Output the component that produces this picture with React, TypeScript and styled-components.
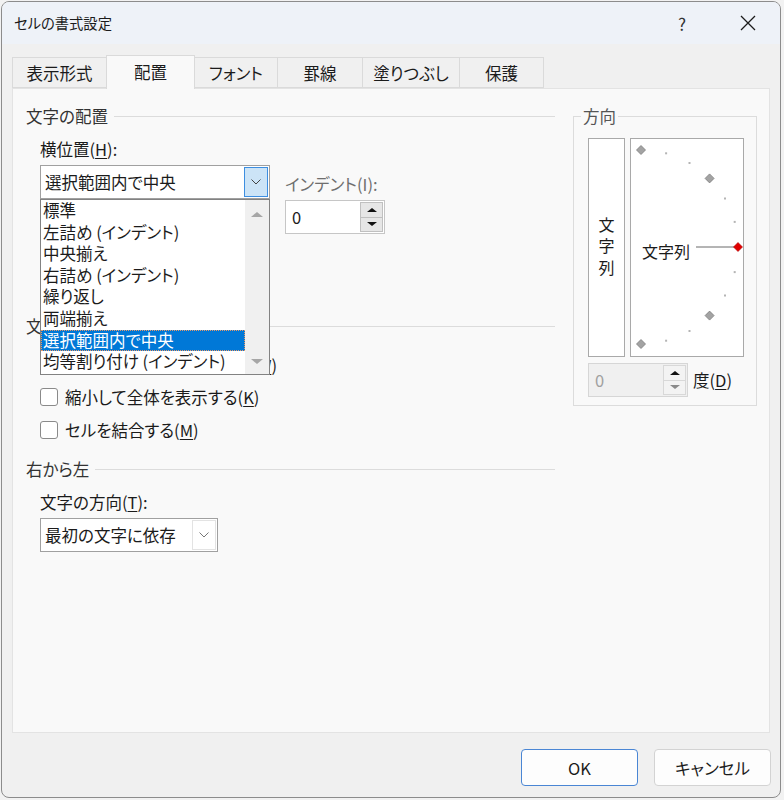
import React from "react";
import styled, { createGlobalStyle } from "styled-components";

const GlobalStyle = createGlobalStyle`
  html, body {
    margin: 0;
    padding: 0;
    background: #f2f2f2;
  }
  body {
    font-family: "Noto Sans CJK JP", "Noto Sans", sans-serif;
    font-feature-settings: "palt";
    color: #1b1b1b;
  }
  * {
    box-sizing: border-box;
  }
`;

const Window = styled.div`
  width: 780px;
  height: 797px;
  margin: 1px 0 0 1px;
  border: 1px solid #8c8c8c;
  border-radius: 8px;
  overflow: hidden;
  background: #f0f0f0;
  display: flex;
  flex-direction: column;
`;

const TitleBar = styled.div`
  height: 42px;
  display: flex;
  align-items: center;
  padding-left: 12px;
  background: #eef2f8;
`;

const Title = styled.div`
  flex: 1;
  font-size: 14.3px;
  line-height: 20px;
`;

const TitleButton = styled.div<{ $gap?: number }>`
  width: 46px;
  height: 42px;
  display: flex;
  align-items: center;
  justify-content: center;
  margin-right: ${({ $gap }) => $gap ?? 0}px;
  font-size: 17px;
  color: #333;
`;

const TabStrip = styled.div`
  display: flex;
  align-items: flex-end;
  height: 33px;
  margin-top: 11px;
  padding-left: 10px;
  position: relative;
  z-index: 2;
`;

const Tab = styled.div<{ $active?: boolean; $width: number }>`
  width: ${({ $width }) => $width}px;
  height: ${({ $active }) => ($active ? 34 : 31)}px;
  margin-bottom: ${({ $active }) => ($active ? -1 : 0)}px;
  margin-left: -1px;
  border: 1px solid #dadada;
  border-bottom: ${({ $active }) => ($active ? "none" : "1px solid #dadada")};
  background: ${({ $active }) => ($active ? "#f9f9f9" : "#f0f0f0")};
  display: flex;
  align-items: center;
  justify-content: center;
  font-size: 16.5px;
  line-height: 20px;
  padding-bottom: ${({ $active }) => ($active ? 2 : 0)}px;

  &:first-child {
    margin-left: 0;
  }
`;

const Panel = styled.div`
  height: 645px;
  margin: 0 10px;
  border: 1px solid #e3e3e3;
  background: #f9f9f9;
  padding: 17px 12px 0 13px;
  display: flex;
  align-items: flex-start;
  gap: 18px;
`;

const LeftColumn = styled.div`
  width: 529px;
  display: flex;
  flex-direction: column;
`;

const SectionHeader = styled.div<{ $top?: number }>`
  display: flex;
  align-items: center;
  gap: 6px;
  height: 20px;
  margin-top: ${({ $top }) => $top ?? 0}px;
  font-size: 16.5px;
  line-height: 20px;
  color: #333;

  &::after {
    content: "";
    flex: 1;
    height: 1px;
    background: #dcdcdc;
  }
`;

const Indented = styled.div<{ $top?: number }>`
  padding-left: 14px;
  margin-top: ${({ $top }) => $top ?? 0}px;
  display: flex;
  flex-direction: column;
`;

const AlignRow = styled.div`
  display: flex;
  gap: 15px;
  height: 134px;
`;

const FieldColumn = styled.div`
  width: 230px;
  position: relative;
  display: flex;
  flex-direction: column;
`;

const IndentColumn = styled.div`
  padding-top: 35px;
  display: flex;
  flex-direction: column;
`;

const Label = styled.div<{ $disabled?: boolean; $top?: number }>`
  height: 20px;
  margin-top: ${({ $top }) => $top ?? 0}px;
  font-size: 16.5px;
  line-height: 20px;
  color: ${({ $disabled }) => ($disabled ? "#6e6e6e" : "#1b1b1b")};
  white-space: nowrap;
`;

const Key = styled.span`
  text-decoration: underline;
  text-underline-offset: 2px;
`;

const Combo = styled.div<{ $width: number; $top?: number }>`
  width: ${({ $width }) => $width}px;
  height: 34px;
  margin-top: ${({ $top }) => $top ?? 6}px;
  border: 1px solid #a0a0a0;
  background: #fff;
  display: flex;
  align-items: center;
  padding: 1px;
`;

const ComboText = styled.div`
  flex: 1;
  padding-left: 3px;
  font-size: 16.5px;
  line-height: 20px;
  white-space: nowrap;
`;

const ComboButton = styled.div<{ $focused?: boolean }>`
  width: 24px;
  height: 100%;
  display: flex;
  align-items: center;
  justify-content: center;
  border: 1px solid ${({ $focused }) => ($focused ? "#3d8ee0" : "#e3e3e3")};
  background: ${({ $focused }) => ($focused ? "#cce4f7" : "#fff")};
`;

const DropList = styled.div`
  position: absolute;
  top: 60px;
  left: 0;
  width: 230px;
  height: 176px;
  border: 1px solid #828282;
  background: #fff;
  display: flex;
  z-index: 5;
`;

const ListItems = styled.div`
  flex: 1;
  display: flex;
  flex-direction: column;
`;

const ListItem = styled.div<{ $selected?: boolean }>`
  height: 21.6px;
  line-height: 21.6px;
  padding-left: 2px;
  font-size: 16.5px;
  white-space: nowrap;
  background: ${({ $selected }) => ($selected ? "#0078d7" : "transparent")};
  color: ${({ $selected }) => ($selected ? "#fff" : "#1b1b1b")};
  outline: ${({ $selected }) => ($selected ? "1px dotted #e89a6a" : "none")};
  outline-offset: -1px;
`;

const ScrollBar = styled.div`
  width: 24px;
  background: #f0f0f0;
  display: flex;
  flex-direction: column;
  justify-content: space-between;
  align-items: center;
  padding: 12px 0 10px;
`;

const Arrow = styled.div<{ $down?: boolean; $color?: string; $size?: number }>`
  width: 0;
  height: 0;
  border-left: ${({ $size }) => $size ?? 6}px solid transparent;
  border-right: ${({ $size }) => $size ?? 6}px solid transparent;
  ${({ $down, $color, $size }) =>
    $down
      ? `border-top: ${($size ?? 6) - 1}px solid ${$color ?? "#a6a6a6"};`
      : `border-bottom: ${($size ?? 6) - 1}px solid ${$color ?? "#a6a6a6"};`}
`;

const Spinner = styled.div<{ $disabled?: boolean; $top?: number }>`
  width: 100px;
  height: 34px;
  margin-top: ${({ $top }) => $top ?? 0}px;
  border: 1px solid ${({ $disabled }) => ($disabled ? "#d6d6d6" : "#c6c6c6")};
  background: ${({ $disabled }) => ($disabled ? "#f0f0f0" : "#fff")};
  display: flex;
  align-items: stretch;
  padding: 1px;
`;

const SpinValue = styled.div<{ $disabled?: boolean }>`
  flex: 1;
  display: flex;
  align-items: center;
  padding-left: 5px;
  font-size: 16.5px;
  color: ${({ $disabled }) => ($disabled ? "#a0a0a0" : "#1b1b1b")};
`;

const SpinButtons = styled.div`
  width: 23px;
  display: flex;
  flex-direction: column;
`;

const SpinHalf = styled.div<{ $disabled?: boolean }>`
  flex: 1;
  display: flex;
  align-items: center;
  justify-content: center;
  background: ${({ $disabled }) => ($disabled ? "#f3f3f3" : "#e6e6e6")};
  border: 1px solid ${({ $disabled }) => ($disabled ? "#d8d8d8" : "#c0c0c0")};

  & + & {
    border-top: none;
  }
`;

const CheckRow = styled.div<{ $top?: number }>`
  display: flex;
  align-items: center;
  gap: 7px;
  height: 20px;
  margin-top: ${({ $top }) => $top ?? 0}px;
  font-size: 16.5px;
  line-height: 20px;
  white-space: nowrap;
`;

const CheckBox = styled.div`
  width: 18px;
  height: 18px;
  border: 1px solid #8a8a8a;
  border-radius: 3px;
  background: #fff;
`;

const DirectionGroup = styled.fieldset`
  width: 184px;
  margin: 0;
  padding: 12px 12px 8px 14px;
  border: 1px solid #dcdcdc;
  min-inline-size: 0;
`;

const GroupLegend = styled.legend`
  padding: 0 2px;
  margin-left: -7px;
  font-size: 16.5px;
  line-height: 20px;
  color: #555;
`;

const DialRow = styled.div`
  display: flex;
  gap: 5px;
  height: 219px;
`;

const VerticalBox = styled.div`
  width: 37px;
  border: 1px solid #a9a9a9;
  background: #fff;
  display: flex;
  flex-direction: column;
  align-items: center;
  justify-content: center;
  font-size: 16px;
  line-height: 21.5px;
  padding-bottom: 3px;
`;

const DialBox = styled.div`
  width: 114px;
  border: 1px solid #a9a9a9;
  background: #fff;
  display: flex;
`;

const DegreeRow = styled.div`
  display: flex;
  align-items: center;
  gap: 5px;
  margin-top: 6px;
  font-size: 16.5px;
  line-height: 20px;
`;

const Footer = styled.div`
  display: flex;
  justify-content: flex-end;
  gap: 16px;
  padding: 16px 9px 0 0;
`;

const DialogButton = styled.button<{ $primary?: boolean }>`
  width: 117px;
  height: 37px;
  border: 1px solid ${({ $primary }) => ($primary ? "#4a86d4" : "#d3d3d3")};
  border-radius: 4px;
  background: #fdfdfd;
  font-family: inherit;
  font-feature-settings: "palt";
  font-size: 16.5px;
  color: #1b1b1b;
  padding: 0;
`;

const Chevron = ({ color = "#555" }: { color?: string }) => (
  <svg width="10" height="6" viewBox="0 0 10 6">
    <polyline points="0.5,0.5 5,5 9.5,0.5" fill="none" stroke={color} strokeWidth="1" />
  </svg>
);

const CloseIcon = () => (
  <svg width="16" height="16" viewBox="0 0 16 16">
    <path d="M1 1 L15 15 M15 1 L1 15" stroke="#1b1b1b" strokeWidth="1.3" />
  </svg>
);

const DialDrawing = () => {
  const cx = 10;
  const cy = 108;
  const r = 97;
  const at = (deg: number) => {
    const rad = (deg * Math.PI) / 180;
    return { x: cx + r * Math.cos(rad), y: cy - r * Math.sin(rad) };
  };
  const diamond = (x: number, y: number, s: number) =>
    `${x},${y - s} ${x + s},${y} ${x},${y + s} ${x - s},${y}`;
  const dots = [75, 60, 30, 15, -15, -30, -60, -75];
  const marks = [90, 45, -45, -90];
  const red = at(0);
  return (
    <svg width="112" height="217" viewBox="0 0 112 217">
      {dots.map((d) => {
        const p = at(d);
        return <rect key={d} x={p.x - 1} y={p.y - 1} width="2" height="2" fill="#b4b4b4" />;
      })}
      {marks.map((d) => {
        const p = at(d);
        return (
          <polygon key={d} points={diamond(p.x, p.y, 4.5)} fill="#a3a3a3" stroke="#7c7c7c" strokeWidth="0.8" />
        );
      })}
      <line x1="65" y1={cy} x2="104" y2={cy} stroke="#6a6a6a" strokeWidth="1" />
      <polygon points={diamond(red.x, red.y, 4.5)} fill="#e00000" stroke="#b00000" strokeWidth="0.6" />
      <text
        x="11"
        y="112"
        dominantBaseline="central"
        fontSize="16"
        fill="#1b1b1b"
        fontFamily='"Noto Sans CJK JP", sans-serif'
      >
        文字列
      </text>
    </svg>
  );
};

const tabs = [
  { label: "表示形式", width: 95 },
  { label: "配置", width: 89 },
  { label: "フォント", width: 84 },
  { label: "罫線", width: 86 },
  { label: "塗りつぶし", width: 98 },
  { label: "保護", width: 85 },
];

const horizontalOptions = [
  "標準",
  "左詰め (インデント)",
  "中央揃え",
  "右詰め (インデント)",
  "繰り返し",
  "両端揃え",
  "選択範囲内で中央",
  "均等割り付け (インデント)",
];

const App = () => {
  return (
    <>
      <GlobalStyle />
      <Window>
        <TitleBar>
          <Title>セルの書式設定</Title>
          <TitleButton $gap={20}>?</TitleButton>
          <TitleButton $gap={9}>
            <CloseIcon />
          </TitleButton>
        </TitleBar>

        <TabStrip>
          {tabs.map((t) => (
            <Tab key={t.label} $width={t.width} $active={t.label === "配置"}>
              {t.label}
            </Tab>
          ))}
        </TabStrip>

        <Panel>
          <LeftColumn>
            <SectionHeader>文字の配置</SectionHeader>
            <Indented $top={13}>
              <AlignRow>
                <FieldColumn>
                  <Label>
                    横位置(<Key>H</Key>):
                  </Label>
                  <Combo $width={230}>
                    <ComboText>選択範囲内で中央</ComboText>
                    <ComboButton $focused>
                      <Chevron color="#444" />
                    </ComboButton>
                  </Combo>
                  <DropList>
                    <ListItems>
                      {horizontalOptions.map((o) => (
                        <ListItem key={o} $selected={o === "選択範囲内で中央"}>
                          {o}
                        </ListItem>
                      ))}
                    </ListItems>
                    <ScrollBar>
                      <Arrow />
                      <Arrow $down />
                    </ScrollBar>
                  </DropList>
                </FieldColumn>
                <IndentColumn>
                  <Label $disabled>インデント(I):</Label>
                  <Spinner $top={6}>
                    <SpinValue>0</SpinValue>
                    <SpinButtons>
                      <SpinHalf>
                        <Arrow $color="#111" $size={5} />
                      </SpinHalf>
                      <SpinHalf>
                        <Arrow $down $color="#111" $size={5} />
                      </SpinHalf>
                    </SpinButtons>
                  </Spinner>
                </IndentColumn>
              </AlignRow>
            </Indented>

            <SectionHeader $top={43}>文字の制御</SectionHeader>
            <Indented $top={19}>
              <CheckRow>
                <CheckBox />
                <span>
                  折り返して全体を表示する(<Key>W</Key>)
                </span>
              </CheckRow>
              <CheckRow $top={12}>
                <CheckBox />
                <span>
                  縮小して全体を表示する(<Key>K</Key>)
                </span>
              </CheckRow>
              <CheckRow $top={13}>
                <CheckBox />
                <span>
                  セルを結合する(<Key>M</Key>)
                </span>
              </CheckRow>
            </Indented>

            <SectionHeader $top={19}>右から左</SectionHeader>
            <Indented $top={13}>
              <Label>
                文字の方向(<Key>T</Key>):
              </Label>
              <Combo $width={178}>
                <ComboText>最初の文字に依存</ComboText>
                <ComboButton>
                  <Chevron color="#777" />
                </ComboButton>
              </Combo>
            </Indented>
          </LeftColumn>

          <DirectionGroup>
            <GroupLegend>方向</GroupLegend>
            <DialRow>
              <VerticalBox>
                <span>文</span>
                <span>字</span>
                <span>列</span>
              </VerticalBox>
              <DialBox>
                <DialDrawing />
              </DialBox>
            </DialRow>
            <DegreeRow>
              <Spinner $disabled>
                <SpinValue $disabled>0</SpinValue>
                <SpinButtons>
                  <SpinHalf $disabled>
                    <Arrow $color="#111" $size={5} />
                  </SpinHalf>
                  <SpinHalf $disabled>
                    <Arrow $down $color="#8a8a8a" $size={5} />
                  </SpinHalf>
                </SpinButtons>
              </Spinner>
              <span>
                度(<Key>D</Key>)
              </span>
            </DegreeRow>
          </DirectionGroup>
        </Panel>

        <Footer>
          <DialogButton $primary>OK</DialogButton>
          <DialogButton>キャンセル</DialogButton>
        </Footer>
      </Window>
    </>
  );
};

export default App;
